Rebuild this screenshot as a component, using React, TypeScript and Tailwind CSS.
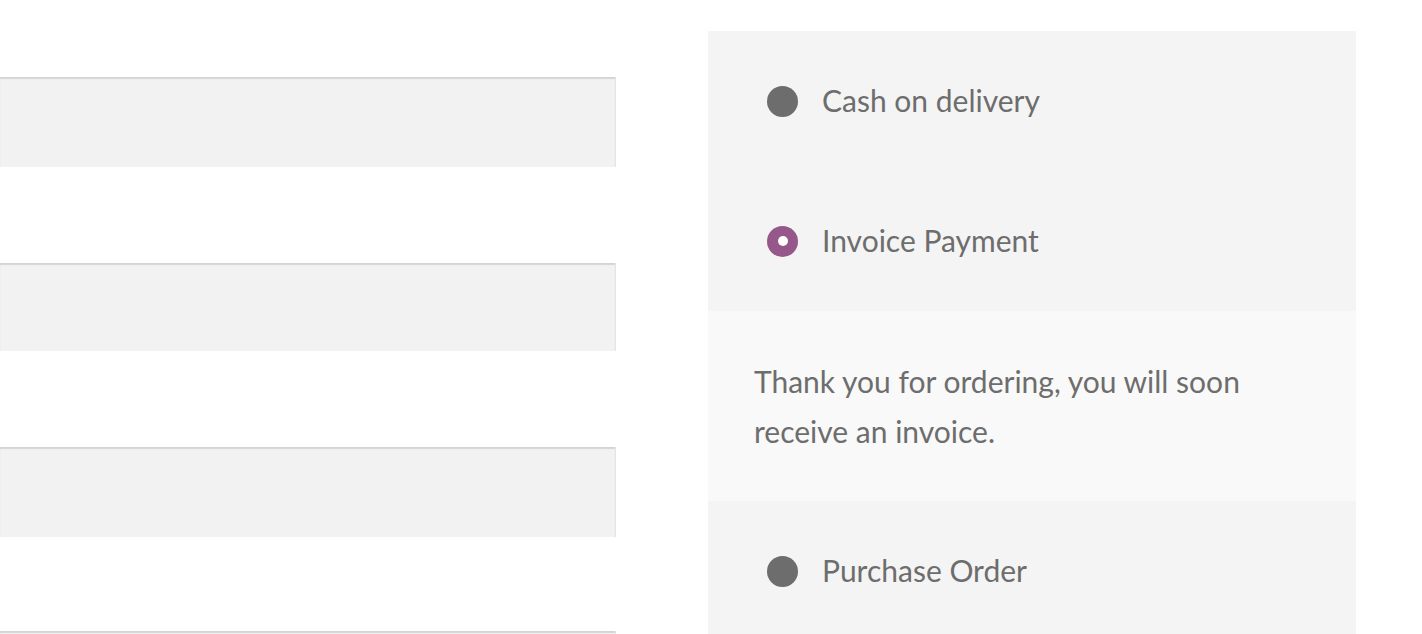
const fields = [
  { mt: "mt-[77px]", h: "h-[90px]" },
  { mt: "mt-[96px]", h: "h-[88px]" },
  { mt: "mt-[96px]", h: "h-[90px]" },
  { mt: "mt-[94px]", h: "h-[90px]" },
];

type Method = { id: string; label: string; description?: string };

const methods: Method[] = [
  { id: "cod", label: "Cash on delivery" },
  { id: "invoice", label: "Invoice Payment", description: "Thank you for ordering, you will soon receive an invoice." },
  { id: "po", label: "Purchase Order" },
];

function Radio({ checked }: { checked: boolean }) {
  if (checked) {
    return (
      <span className="flex h-[31px] w-[31px] shrink-0 items-center justify-center rounded-full bg-[#96588a]">
        <span className="h-[10px] w-[10px] rounded-full bg-white" />
      </span>
    );
  }
  return <span className="h-[31px] w-[31px] shrink-0 rounded-full bg-[#6d6d6d]" />;
}

export default function App() {
  const selected = "invoice";
  return (
    <div className="flex h-[634px] w-[1422px] overflow-hidden bg-white font-['Lato',sans-serif] text-[#6d6d6d]">
      <div className="flex w-[616px] shrink-0 flex-col">
        {fields.map((f, i) => (
          <div
            key={i}
            className={`${f.mt} ${f.h} shrink-0 border-r border-[#e4e4e4] bg-[#f2f2f2] shadow-[inset_0_2px_1px_rgba(0,0,0,0.12)]`}
          />
        ))}
      </div>

      <div className="ml-[92px] mt-[31px] w-[648px] shrink-0">
        <ul className="bg-[#f4f4f4]">
          {methods.map((m) => (
            <li key={m.id}>
              <div className="flex h-[140px] items-center gap-[24px] pl-[59px] text-[30px]">
                <Radio checked={m.id === selected} />
                <span className="-translate-y-px">{m.label}</span>
              </div>
              {m.id === selected && m.description && (
                <div className="bg-[#f9f9f9] px-[46px] py-[45px] text-[30px] leading-[50px]">
                  <p className="w-[520px]">{m.description}</p>
                </div>
              )}
            </li>
          ))}
        </ul>
      </div>
    </div>
  );
}
